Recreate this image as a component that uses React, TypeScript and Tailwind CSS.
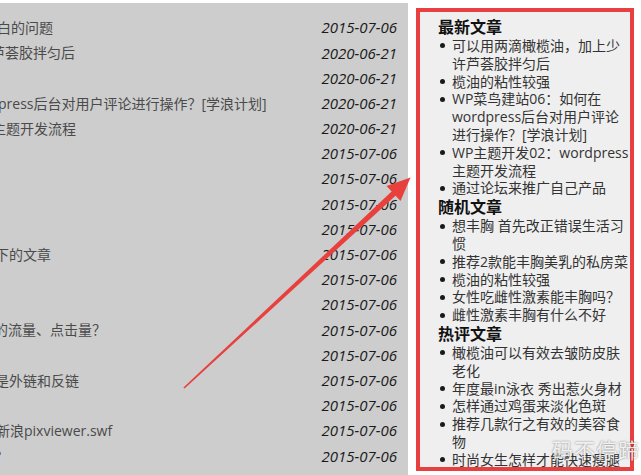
import React from 'react';

interface IRow {
	title: string;
	shift: string;
	date: string;
}

interface ISection {
	heading: string;
	items: string[];
}

const rows: IRow[] = [
	{ title: '白的问题', shift: '-ml-[3px]', date: '2015-07-06' },
	{ title: '芦荟胶拌匀后', shift: '-ml-[9px]', date: '2020-06-21' },
	{ title: '', shift: '', date: '2020-06-21' },
	{ title: 'press后台对用户评论进行操作？[学浪计划]', shift: '-ml-[2px]', date: '2020-06-21' },
	{ title: '主题开发流程', shift: '-ml-[8px]', date: '2020-06-21' },
	{ title: '', shift: '', date: '2015-07-06' },
	{ title: '', shift: '', date: '2015-07-06' },
	{ title: '', shift: '', date: '2015-07-06' },
	{ title: '', shift: '', date: '2015-07-06' },
	{ title: '下的文章', shift: '-ml-[5px]', date: '2015-07-06' },
	{ title: '', shift: '', date: '2015-07-06' },
	{ title: '', shift: '', date: '2015-07-06' },
	{ title: '的流量、点击量？', shift: '-ml-[6px]', date: '2015-07-06' },
	{ title: '', shift: '', date: '2015-07-06' },
	{ title: '是外链和反链', shift: '-ml-[5px]', date: '2015-07-06' },
	{ title: '', shift: '', date: '2015-07-06' },
	{ title: '新浪pixviewer.swf', shift: '-ml-[4px]', date: '2015-07-06' },
	{ title: '?', shift: '-ml-[5px]', date: '2015-07-06' },
];

const sections: ISection[] = [
	{
		heading: '最新文章',
		items: [
			'可以用两滴橄榄油，加上少许芦荟胶拌匀后',
			'榄油的粘性较强',
			'WP菜鸟建站06：如何在wordpress后台对用户评论进行操作？[学浪计划]',
			'WP主题开发02：wordpress主题开发流程',
			'通过论坛来推广自己产品',
		],
	},
	{
		heading: '随机文章',
		items: [
			'想丰胸 首先改正错误生活习惯',
			'推荐2款能丰胸美乳的私房菜',
			'榄油的粘性较强',
			'女性吃雌性激素能丰胸吗？',
			'雌性激素丰胸有什么不好',
		],
	},
	{
		heading: '热评文章',
		items: [
			'橄榄油可以有效去皱防皮肤老化',
			'年度最in泳衣 秀出惹火身材',
			'怎样通过鸡蛋来淡化色斑',
			'推荐几款行之有效的美容食物',
			'时尚女生怎样才能快速瘦腿',
		],
	},
];

const font = "font-['Open_Sans','Noto_Sans_CJK_SC',sans-serif]";

// red annotation arrow drawn over the screenshot
const Arrow = () => (
	<svg
		className="absolute inset-0 pointer-events-none"
		width="641"
		height="475"
		viewBox="0 0 641 475"
	>
		<polygon
			points="184.6,388.6 183.4,387.4 394.8,188.6 398.8,192.8"
			fill="#e8403d"
		/>
		<polygon points="410.5,177.5 386.5,186 400.5,201" fill="#e8403d" />
	</svg>
);

const App = () => {
	return (
		<div className={`relative w-[641px] h-[475px] overflow-hidden bg-white flex ${font}`}>
			<div className="mt-[3px] w-[408px] shrink-0 bg-[#cdcdcd] overflow-hidden pt-[12px] pr-[11px]">
				{rows.map((row, idx) => (
					<div key={idx} className="h-[25.2px] flex items-center justify-between">
						<span className={`text-[14px] text-[#4a4a4a] whitespace-nowrap ${row.shift}`}>
							{row.title}
						</span>
						<span className="text-[15px] italic text-[#1a1a1a] font-['Open_Sans',sans-serif]">
							{row.date}
						</span>
					</div>
				))}
			</div>

			<div className="ml-[8px] mt-[8px] w-[218px] h-[463px] shrink-0 border-4 border-[#e84040] bg-[#efefef] overflow-hidden pl-[18px] pt-[5px]">
				{sections.map(section => (
					<div key={section.heading}>
						<h3 className="text-[16px] leading-[20px] font-bold text-[#111]">
							{section.heading}
						</h3>
						<ul>
							{section.items.map((item, idx) => (
								<li key={idx} className="flex text-[14px] leading-[17.8px] text-[#333]">
									<span className="w-[14px] h-[17.8px] shrink-0 flex items-center">
										<span className="ml-[2px] w-[5px] h-[5px] rounded-full bg-[#1a1a1a]" />
									</span>
									<span className="w-[178px]">{item}</span>
								</li>
							))}
						</ul>
					</div>
				))}
			</div>

			<Arrow />

			<div className="absolute left-[552px] top-[435px] text-[21px] tracking-[1px] text-white/85 [text-shadow:0_0_2px_rgba(0,0,0,0.5)] pointer-events-none">
				码不停蹄
			</div>
		</div>
	);
};

export default App;
